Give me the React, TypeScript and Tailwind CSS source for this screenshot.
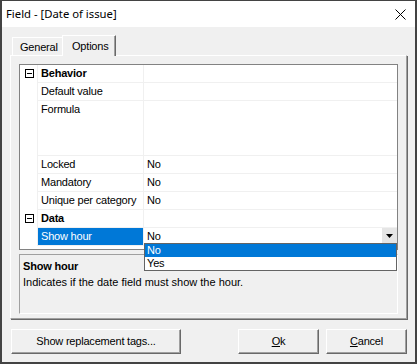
import React from "react";

function MinusBox() {
  return (
    <div className="ml-[5px] w-[9px] h-[9px] border border-black bg-white flex items-center justify-center">
      <div className="w-[5px] h-px bg-black" />
    </div>
  );
}

type Row = {
  name: string;
  value?: string;
  category?: boolean;
  tall?: boolean;
  selected?: boolean;
};

const rows: Row[] = [
  { name: "Behavior", category: true },
  { name: "Default value" },
  { name: "Formula", tall: true },
  { name: "Locked", value: "No" },
  { name: "Mandatory", value: "No" },
  { name: "Unique per category", value: "No" },
  { name: "Data", category: true },
  { name: "Show hour", value: "No", selected: true },
];

function GridRow({ r }: { r: Row }) {
  return (
    <div className={`flex ${r.tall ? "h-[55px]" : "h-[18px]"}`}>
      <div className="w-[18px] border-r border-[#f0f0f0] flex items-start pt-[4px]">
        {r.category ? <MinusBox /> : null}
      </div>
      <div
        className={`w-[106px] border-r border-b border-[#f0f0f0] pl-[3px] leading-[17px] whitespace-nowrap ${
          r.category ? "font-bold" : ""
        } ${r.selected ? "bg-[#0078d7] text-white" : ""}`}
      >
        {r.name}
      </div>
      <div className="flex-1 border-b border-[#f0f0f0] pl-[3px] leading-[17px] flex justify-between">
        <span>{r.value ?? ""}</span>
        {r.selected ? (
          <div className="w-[15px] h-[15px] bg-[#e5e5e5] flex items-center justify-center">
            <svg width="7" height="4" viewBox="0 0 7 4">
              <path d="M0 0 H7 L3.5 4 Z" fill="#000" />
            </svg>
          </div>
        ) : null}
      </div>
    </div>
  );
}

export default function App() {
  return (
    <div className="w-[417px] h-[364px] bg-[#f0f0f0] border-2 border-t border-[#434343] flex flex-col text-[11px] tracking-[-0.2px] text-black font-['Liberation_Sans',Arial,sans-serif]">
      {/* Title bar */}
      <div className="h-[26px] bg-white flex items-center justify-between pl-[4px] pr-[9px]">
        <span className="text-[11.3px] tracking-normal font-['Noto_Sans',sans-serif]">Field - [Date of issue]</span>
        <svg width="11" height="11" viewBox="0 0 11 11">
          <path d="M0.5 0.5 L10.5 10.5 M10.5 0.5 L0.5 10.5" stroke="#000" strokeWidth="1" />
        </svg>
      </div>

      {/* Body */}
      <div className="flex-1 flex flex-col px-[8px] pt-[8px]">
        {/* Tabs */}
        <div className="h-[20px] flex items-end ml-[2px] relative z-10">
          <div className="w-[50px] h-[18px] border-l border-t border-white pl-[7px] leading-[18px]">
            General
          </div>
          <div className="w-[54px] h-[21px] -mb-px bg-[#f0f0f0] border-l border-t border-white border-r border-r-[#696969] shadow-[inset_-1px_0_0_#a0a0a0] pl-[9px] leading-[20px]">
            Options
          </div>
        </div>

        {/* Panel */}
        <div className="h-[264px] border border-t-white border-l-white border-r-[#a0a0a0] border-b-[#a0a0a0] shadow-[1px_1px_0_#696969] pt-[8px] px-[8px] pb-[4px] flex flex-col">
          <div className="h-[186px] border border-[#828282] bg-white relative">
            {rows.map((r) => (
              <GridRow key={r.name} r={r} />
            ))}
            {/* Dropdown list */}
            <div className="absolute left-[124px] top-[178px] w-[253px] h-[28px] border border-[#646464] bg-white z-20">
              <div className="h-[13px] bg-[#0078d7] text-white pl-[2px] leading-[13px]">No</div>
              <div className="h-[13px] pl-[2px] leading-[13px]">Yes</div>
            </div>
          </div>
          <div className="mt-[4px] h-[60px] border border-t-[#a0a0a0] border-l-[#a0a0a0] border-r-white border-b-white pl-[3px] pt-[4px]">
            <div className="font-bold leading-[14px]">Show hour</div>
            <div className="mt-[2px] leading-[14px] tracking-normal">Indicates if the date field must show the hour.</div>
          </div>
        </div>

        {/* Buttons */}
        <div className="mt-[10px] flex justify-between">
          <button className="ml-[1px] w-[170px] h-[25px] border border-t-white border-l-white border-r-[#696969] border-b-[#696969] shadow-[inset_-1px_-1px_0_#a0a0a0] bg-[#f0f0f0] text-[11px]">
            Show replacement tags...
          </button>
          <div className="flex gap-[7px]">
            <button className="w-[81px] h-[25px] border border-t-white border-l-white border-r-[#696969] border-b-[#696969] shadow-[inset_-1px_-1px_0_#a0a0a0] bg-[#f0f0f0] text-[11px]">
              <span className="underline">O</span>k
            </button>
            <button className="w-[81px] h-[25px] border border-t-white border-l-white border-r-[#696969] border-b-[#696969] shadow-[inset_-1px_-1px_0_#a0a0a0] bg-[#f0f0f0] text-[11px]">
              <span className="underline">C</span>ancel
            </button>
          </div>
        </div>
      </div>
    </div>
  );
}
